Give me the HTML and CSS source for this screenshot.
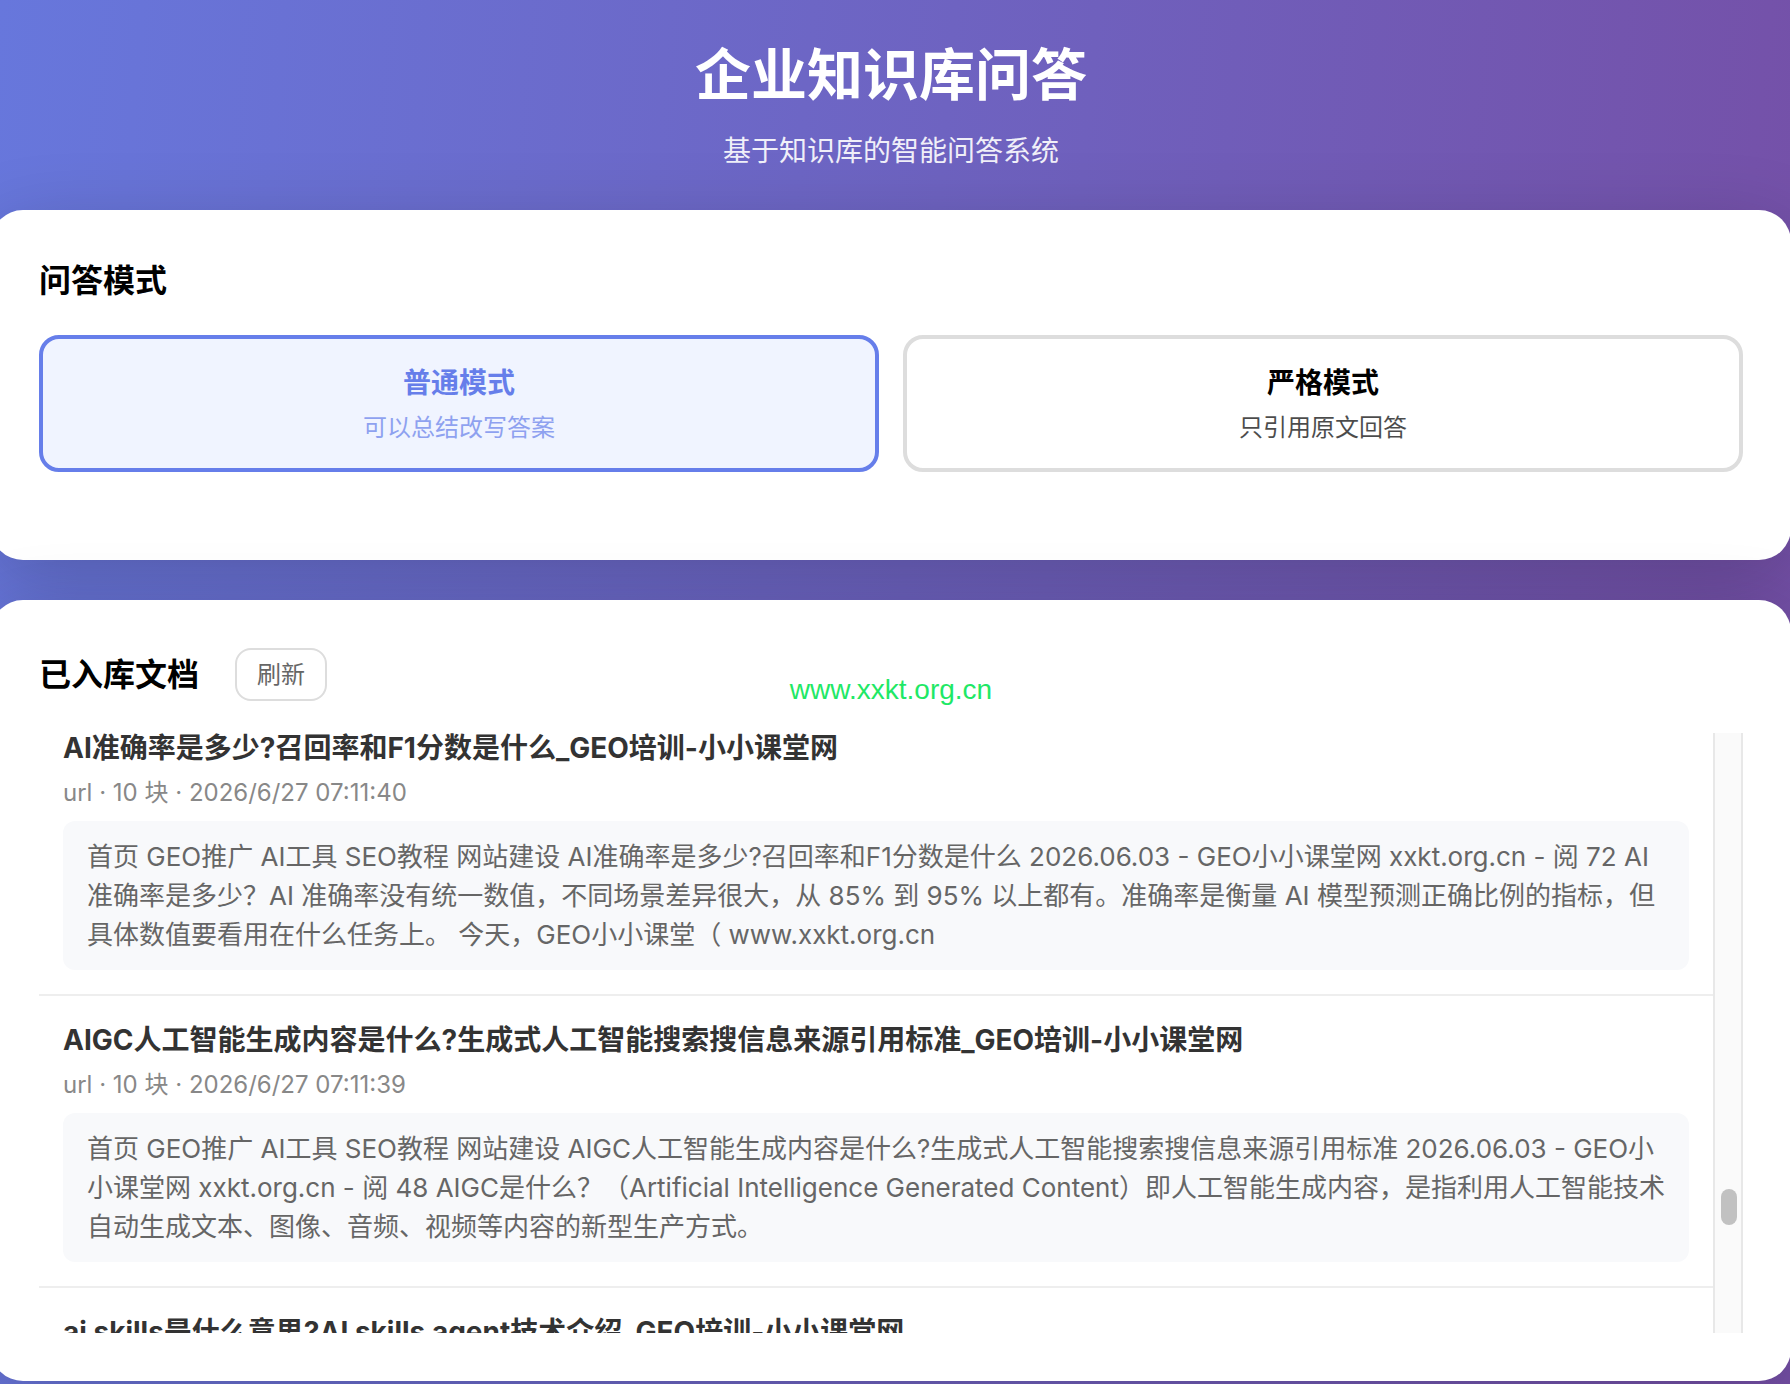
FILE: index.html
```html
<!DOCTYPE html>
<html lang="zh-CN">
<head>
<meta charset="utf-8">
<meta name="viewport" content="width=device-width, initial-scale=1">
<title>企业知识库问答</title>
<link rel="stylesheet" href="styles.css">
</head>
<body>
<main class="page">
  <header class="hero">
    <h1 class="hero-title">企业知识库问答</h1>
    <p class="hero-sub">基于知识库的智能问答系统</p>
  </header>

  <section class="card card-modes">
    <h2 class="card-title">问答模式</h2>
    <div class="modes">
      <button type="button" class="mode mode-active" aria-pressed="true">
        <span class="mode-name">普通模式</span>
        <span class="mode-desc">可以总结改写答案</span>
      </button>
      <button type="button" class="mode" aria-pressed="false">
        <span class="mode-name">严格模式</span>
        <span class="mode-desc">只引用原文回答</span>
      </button>
    </div>
  </section>

  <section class="card">
    <div class="docs-head">
      <h2 class="card-title">已入库文档</h2>
      <button type="button" class="refresh">刷新</button>
    </div>
    <span class="watermark">www.xxkt.org.cn</span>
    <div class="docs">
      <div class="doc-list">
        <article class="doc">
          <h3 class="doc-title">AI准确率是多少?召回率和F1分数是什么_GEO培训-小小课堂网</h3>
          <p class="doc-meta">url · 10 块 · 2026/6/27 07:11:40</p>
          <p class="doc-preview">首页 GEO推广 AI工具 SEO教程 网站建设 AI准确率是多少?召回率和F1分数是什么 2026.06.03 - GEO小小课堂网 xxkt.org.cn - 阅 72 AI 准确率是多少？AI 准确率没有统一数值，不同场景差异很大，从 85% 到 95% 以上都有。准确率是衡量 AI 模型预测正确比例的指标，但具体数值要看用在什么任务上。 今天，GEO小小课堂（ www.xxkt.org.cn</p>
        </article>
        <article class="doc">
          <h3 class="doc-title">AIGC人工智能生成内容是什么?生成式人工智能搜索搜信息来源引用标准_GEO培训-小小课堂网</h3>
          <p class="doc-meta">url · 10 块 · 2026/6/27 07:11:39</p>
          <p class="doc-preview">首页 GEO推广 AI工具 SEO教程 网站建设 AIGC人工智能生成内容是什么?生成式人工智能搜索搜信息来源引用标准 2026.06.03 - GEO小小课堂网 xxkt.org.cn - 阅 48 AIGC是什么？（Artificial Intelligence Generated Content）即人工智能生成内容，是指利用人工智能技术自动生成文本、图像、音频、视频等内容的新型生产方式。</p>
        </article>
        <article class="doc">
          <h3 class="doc-title">ai skills是什么意思?AI skills agent技术介绍_GEO培训-小小课堂网</h3>
        </article>
      </div>
      <div class="scrollbar" aria-hidden="true"><div class="scrollbar-thumb"></div></div>
    </div>
  </section>
</main>
</body>
</html>
```
FILE: styles.css
```css
* {
  box-sizing: border-box;
  margin: 0;
  padding: 0;
}

body {
  min-height: 100vh;
  overflow-x: hidden;
  background: linear-gradient(95deg, #6777dc, #754fa6);
  color: #000;
  font-family: Inter, "Noto Sans CJK SC", sans-serif;
}

button {
  font-family: inherit;
  cursor: pointer;
}

.page {
  display: flex;
  flex-direction: column;
  margin: 0 -1px 0 -9px;
}

.hero {
  padding: 36px 48px 38px;
  color: #fff;
  text-align: center;
}

.hero-title {
  margin-bottom: 16px;
  font-size: 56px;
  font-weight: 700;
  line-height: 78px;
}

.hero-sub {
  font-size: 28px;
  line-height: 42px;
  opacity: 0.9;
}

.card {
  position: relative;
  padding: 48px;
  border-radius: 32px;
  background: #fff;
  box-shadow: 0 20px 80px rgba(0, 0, 0, 0.2);
}

.card-modes {
  margin-bottom: 40px;
  padding-bottom: 88px;
}

.card-title {
  font-size: 32px;
  font-weight: 600;
  line-height: 45px;
}

.modes {
  display: grid;
  grid-template-columns: 1fr 1fr;
  gap: 24px;
  margin-top: 32px;
}

.mode {
  display: flex;
  flex-direction: column;
  align-items: center;
  gap: 8px;
  padding: 25px 24px 23px;
  border: 4px solid #ddd;
  border-radius: 20px;
  background: #fff;
  color: #000;
}

.mode-active {
  border-color: #667eea;
  background: #f0f4ff;
  color: #667eea;
}

.mode-name {
  font-size: 28px;
  font-weight: 600;
  line-height: 39px;
}

.mode-desc {
  font-size: 24px;
  line-height: 34px;
  opacity: 0.7;
}

.docs-head {
  display: flex;
  align-items: center;
  gap: 36px;
  margin-bottom: 32px;
}

.refresh {
  padding: 8px 20px;
  border: 2px solid #ddd;
  border-radius: 16px;
  background: #fff;
  color: #666;
  font-size: 24px;
  line-height: 33px;
}

.watermark {
  position: absolute;
  top: 74px;
  left: 0;
  right: 0;
  color: #1fe866;
  font: 28px/32px "Liberation Sans", sans-serif;
  text-align: center;
  pointer-events: none;
}

.docs {
  display: flex;
  height: 600px;
  overflow: hidden;
}

.doc-list {
  flex: 1;
  min-width: 0;
  margin-top: -29px;
}

.doc {
  padding: 24px;
  border-bottom: 2px solid #eee;
}

.doc-title {
  margin-bottom: 7px;
  color: #333;
  font-size: 28px;
  font-weight: 700;
  line-height: 41px;
}

.doc-meta {
  margin-bottom: 11px;
  color: #888;
  font-size: 24px;
  line-height: 34px;
}

.doc-preview {
  padding: 16px 20px 16px 24px;
  border-radius: 12px;
  background: #f8f9fb;
  color: #666;
  font-size: 26px;
  line-height: 39px;
}

.scrollbar {
  width: 30px;
  padding: 456px 4px 0 6px;
  border: solid #e8e8e8;
  border-width: 0 2px;
  background: #fafafa;
}

.scrollbar-thumb {
  height: 36px;
  border-radius: 8px;
  background: #c1c1c1;
}
```
